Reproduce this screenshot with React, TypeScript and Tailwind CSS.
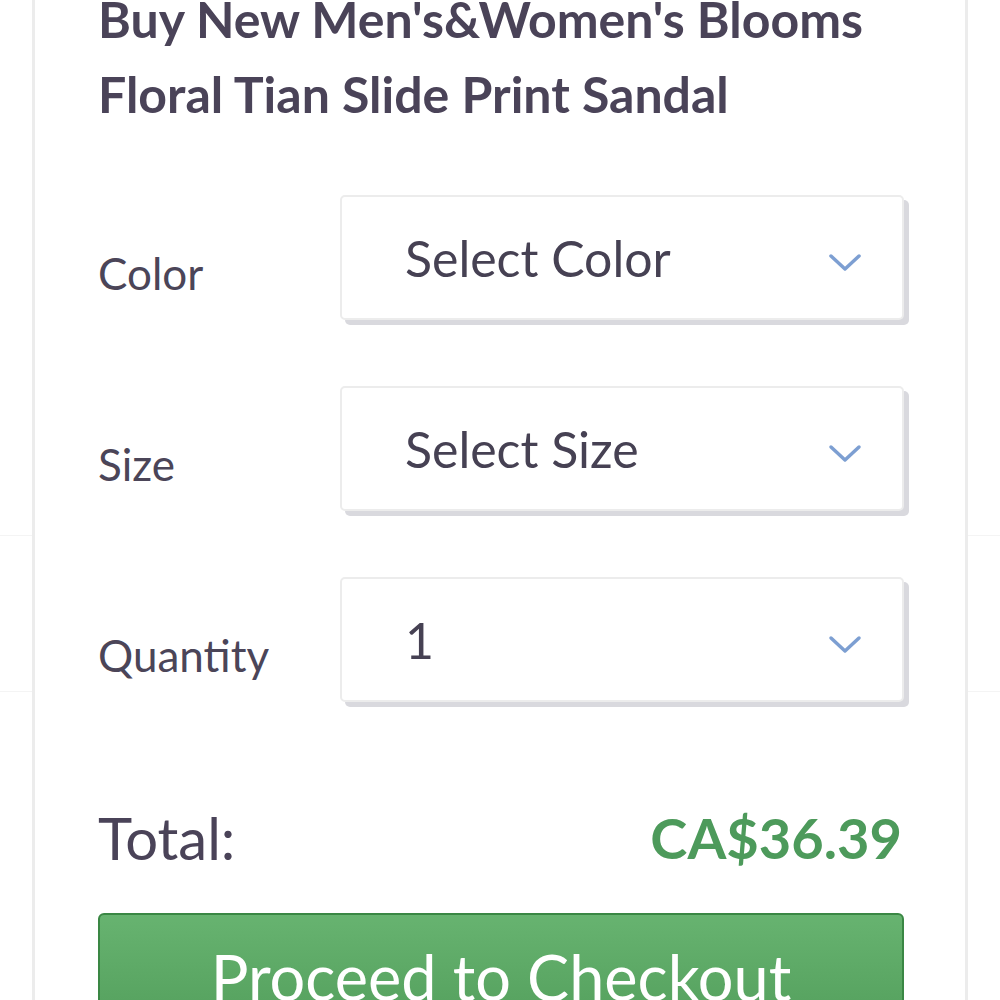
import React from "react";

const font = { fontFamily: "Lato, 'Open Sans', sans-serif" };

function Chevron() {
  return (
    <svg width="34" height="20" viewBox="0 0 34 20" fill="none" className="shrink-0 mt-[10px]">
      <path d="M3 3 L17 16 L31 3" stroke="#7d9fd2" strokeWidth="3.5" strokeLinecap="round" strokeLinejoin="round" />
    </svg>
  );
}

function SelectRow({ label, value }: { label: string; value: string }) {
  return (
    <div className="flex items-start">
      <div className="w-[242px] shrink-0 pt-[56px] text-[44px] leading-[44px] text-[#4b4558]">{label}</div>
      <div className="flex-1 h-[125px] bg-white border-2 border-[#ececec] rounded-[5px] shadow-[5px_5px_0_#d9d9de] flex items-center pl-[63px] pr-[40px]">
        <span className="flex-1 text-[50px] leading-[50px] text-[#464153]">{value}</span>
        <Chevron />
      </div>
    </div>
  );
}

function Gutter() {
  return (
    <div className="w-[32px] shrink-0 flex flex-col">
      <div className="h-[536px] border-b border-[#f4f4f4]" />
      <div className="h-[156px] border-b border-[#f4f4f4]" />
    </div>
  );
}

export default function App() {
  return (
    <div className="w-[1000px] h-[1000px] overflow-hidden bg-white flex" style={font}>
      <Gutter />
      <div className="flex-1 border-x-[3px] border-[#ececec] bg-white pl-[63px] pr-[61px]">
        <h1 className="mt-[-18px] text-[50px] leading-[75px] font-bold text-[#4a4358]">
          Buy New Men's&amp;Women's Blooms Floral Tian Slide Print Sandal
        </h1>
        <div className="mt-[63px] flex flex-col gap-[66px]">
          <SelectRow label="Color" value="Select Color" />
          <SelectRow label="Size" value="Select Size" />
          <SelectRow label="Quantity" value="1" />
        </div>
        <div className="mt-[107px] flex items-center justify-between">
          <span className="text-[58px] leading-[58px] text-[#4a4358]">Total:</span>
          <span className="text-[56px] leading-[58px] font-bold text-[#4d9a5b] pr-[2px]">CA$36.39</span>
        </div>
        <button className="mt-[46px] w-full h-[140px] rounded-[6px] border-2 border-[#3a8744] bg-gradient-to-b from-[#67b370] to-[#4f9b58] text-white text-[63px] leading-[63px] pt-[30px] flex justify-center items-start">
          Proceed to Checkout
        </button>
      </div>
      <Gutter />
    </div>
  );
}
